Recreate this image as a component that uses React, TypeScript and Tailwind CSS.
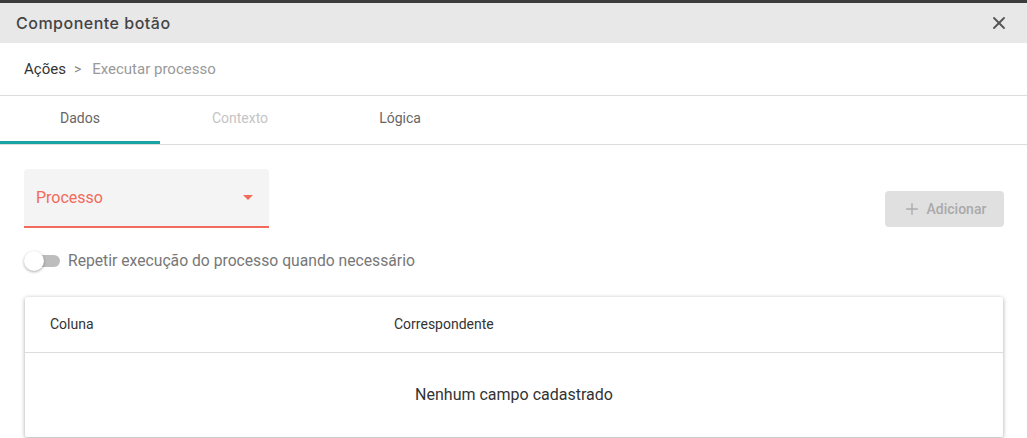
import { X, Plus } from "lucide-react"

const roboto = { fontFamily: "Roboto, 'Liberation Sans', sans-serif" }

export default function App() {
  return (
    <div className="w-[1027px] h-[438px] overflow-hidden bg-white" style={roboto}>
      {/* top strip */}
      <div className="h-[3px] bg-[#3c3c3c]" />

      {/* header */}
      <div className="h-[40px] bg-[#e8e8e8] flex items-center justify-between pl-4 pr-[18px]">
        <span
          className="text-[16px] text-[#444] font-medium tracking-[0.5px]"
          style={{ fontFamily: "Inter, 'Open Sans', sans-serif" }}
        >
          Componente botão
        </span>
        <X className="w-[20px] h-[20px] text-[#555]" strokeWidth={2.2} />
      </div>

      {/* breadcrumb */}
      <div className="h-[53px] flex items-center px-6 text-[15px] border-b border-[#dcdcdc]">
        <span className="text-[#333]">Ações</span>
        <span className="text-[#888] ml-[8px] mr-[11px] text-[14px]">&gt;</span>
        <span className="text-[#999]">Executar processo</span>
      </div>

      {/* tabs */}
      <div className="flex h-[49px] border-b border-[#dcdcdc] text-[14px]">
        <div className="w-[160px] flex flex-col">
          <div className="flex-1 flex items-center justify-center text-[#666]">Dados</div>
          <div className="h-[3px] bg-[#17a2a4]" />
        </div>
        <div className="w-[160px] flex items-center justify-center text-[#c4c4c4] pb-[3px]">Contexto</div>
        <div className="w-[160px] flex items-center justify-center text-[#666] pb-[3px]">Lógica</div>
      </div>

      {/* form */}
      <div className="pl-6 pr-[23px] pt-6">
        <div className="flex justify-between items-end">
          <div className="w-[245px] h-[59px] bg-[#f4f4f4] rounded-t-[4px] border-b-2 border-[#f26a5a] flex items-center justify-between pl-3 pr-4">
            <span className="text-[16px] text-[#f26a5a]">Processo</span>
            <svg width="10" height="5" viewBox="0 0 10 5">
              <path d="M0 0 L10 0 L5 5 Z" fill="#f26a5a" />
            </svg>
          </div>
          <button className="w-[119px] h-[36px] mb-[1px] bg-[#e0e0e0] rounded-[4px] flex items-center justify-center gap-[6px] text-[14px] font-medium text-[#aaa]">
            <Plus className="w-[18px] h-[18px] text-[#aaa]" strokeWidth={1.8} />
            Adicionar
          </button>
        </div>

        {/* switch */}
        <div className="flex items-center mt-[22px] h-[22px]">
          <div className="relative w-[36px] h-[20px] flex items-center">
            <div className="w-[34px] h-[12px] rounded-full bg-[#bdbdbd] ml-[2px]" />
            <div className="absolute left-0 top-0 w-[20px] h-[20px] rounded-full bg-white shadow-[0_1px_3px_rgba(0,0,0,0.35)]" />
          </div>
          <span className="ml-[8px] text-[15.7px] text-[#777]">Repetir execução do processo quando necessário</span>
        </div>

        {/* table */}
        <div className="mt-[25px] ml-[1px] w-[978px] bg-white shadow-[0_1px_4px_rgba(0,0,0,0.35)] rounded-[2px]">
          <div className="h-[56px] flex items-center text-[14px] text-[#333] border-b border-[#dcdcdc]">
            <div className="w-[369px] pl-[25px]">Coluna</div>
            <div>Correspondente</div>
          </div>
          <div className="h-[84px] flex items-center justify-center text-[16px] text-[#333]">
            Nenhum campo cadastrado
          </div>
        </div>
      </div>
    </div>
  )
}
